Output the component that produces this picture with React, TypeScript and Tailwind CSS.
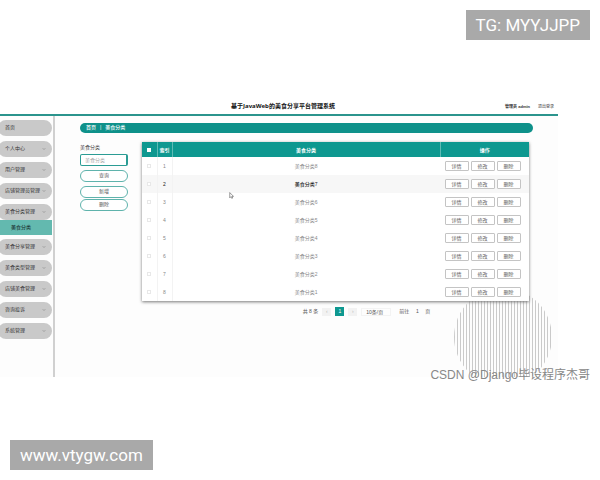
import clsx from 'clsx'
import { ChevronDown } from 'lucide-react'

const MENU_TOP = ['首页', '个人中心', '用户管理', '店铺管理员管理', '美食分类管理']
const MENU_BOTTOM = ['美食分享管理', '美食类型管理', '店铺美食管理', '咨询投诉', '系统管理']
const ROWS = [1, 2, 3, 4, 5, 6, 7, 8]
const STRIPES = Array.from({ length: 33 }, (_, i) => i)

function MenuItem({ label }: { label: string }) {
  return (
    <button className="-ml-0.5 flex h-4 items-center justify-between rounded-full bg-[#c9c9c9] pr-1.5 pl-[7px] text-[5px] text-[#333]">
      <span>{label}</span>
      {label !== '首页' && <ChevronDown size={4} strokeWidth={4} className="text-[#888]" />}
    </button>
  )
}

function Sidebar() {
  return (
    <nav className="w-[55px] shrink-0 border-r-2 border-[#d0d0d0] pt-1 pr-px">
      <div className="flex flex-col gap-[5px]">
        {MENU_TOP.map((label) => (
          <MenuItem key={label} label={label} />
        ))}
      </div>
      <a
        href="#category"
        className="mb-1 flex h-[15px] items-center bg-[#63b9af] pl-[11px] text-[5px] font-medium text-[#1f3b39]"
      >
        美食分类
      </a>
      <div className="flex flex-col gap-[5px]">
        {MENU_BOTTOM.map((label) => (
          <MenuItem key={label} label={label} />
        ))}
      </div>
    </nav>
  )
}

function SearchPanel() {
  return (
    <form className="flex w-12 shrink-0 flex-col pt-px text-[5px]">
      <label htmlFor="category" className="mb-[3px] leading-2 text-[#444]">
        美食分类
      </label>
      <input
        id="category"
        placeholder="美食分类"
        className="mb-1 h-3 w-full rounded-xs border border-r-2 border-[#2b9c94] bg-white px-1 placeholder:text-[#aaa]"
      />
      <button type="button" className="mb-1 h-3 rounded-full border border-[#5fb3ac] bg-white text-[#555]">
        查询
      </button>
      <button type="button" className="mb-px h-3 rounded-full border border-[#5fb3ac] bg-white text-[#555]">
        新增
      </button>
      <button type="button" className="h-3 rounded-full border border-[#5fb3ac] bg-white text-[#555]">
        删除
      </button>
    </form>
  )
}

function CategoryTable() {
  return (
    <table className="w-full table-fixed border-collapse bg-white text-center text-[5px] leading-[6px] shadow-[0_1px_3px_#777]">
      <thead>
        <tr className="h-[15px] bg-[#0e9890] text-white">
          <th className="w-[15px] border-r border-[#5fbbb5] p-0">
            <input type="checkbox" aria-label="全选" className="mx-auto block size-1 appearance-none bg-white" />
          </th>
          <th className="w-[15px] border-r border-[#5fbbb5] p-0">索引</th>
          <th className="border-r border-[#5fbbb5] p-0">美食分类</th>
          <th className="w-[89px] p-0">操作</th>
        </tr>
      </thead>
      <tbody>
        {ROWS.map((n) => (
          <tr key={n} className={clsx('h-[18px]', n === 2 ? 'bg-[#f7f7f7] text-[#222]' : 'text-[#888]')}>
            <td className="border-r border-[#f3f3f3] p-0">
              <input
                type="checkbox"
                aria-label={`选择 ${n}`}
                className="mx-auto block size-1 appearance-none border border-[#e8e8e8] bg-white"
              />
            </td>
            <td className="border-r border-[#f3f3f3] p-0">{n}</td>
            <td className={clsx('p-0', n === 2 && 'font-medium')}>美食分类{9 - n}</td>
            <td className="p-0 pr-1">
              <div className="flex justify-center gap-0.5">
                {['详情', '修改', '删除'].map((action) => (
                  <button key={action} className="h-2.5 w-6 rounded-[1px] border border-[#c4c4c4] bg-white text-[#555]">
                    {action}
                  </button>
                ))}
              </div>
            </td>
          </tr>
        ))}
      </tbody>
    </table>
  )
}

function Pagination() {
  return (
    <div className="mt-1.5 flex h-[9px] items-center justify-center pl-[62px] text-[5px] text-[#555]">
      <span className="mr-1">共 8 条</span>
      <button className="mr-1 h-2 w-[9px] bg-[#f2f2f2] text-[#bbb]">‹</button>
      <button className="mr-1 h-[9px] w-[9px] bg-[#0e9890] text-white">1</button>
      <button className="mr-1 h-2 w-[9px] bg-[#f2f2f2] text-[#bbb]">›</button>
      <select aria-label="每页条数" className="mr-2 h-2 w-[30px] appearance-none border border-[#f3f3f3] px-1">
        <option>10条/页</option>
      </select>
      <label htmlFor="page">前往</label>
      <input id="page" defaultValue="1" className="w-4 text-center" />
      <span>页</span>
    </div>
  )
}

function StripedCircle() {
  return (
    <svg viewBox="0 0 98 92" className="absolute right-1.5 bottom-0 h-[92px] w-[98px]">
      <clipPath id="disc">
        <circle cx="49" cy="52" r="49" />
      </clipPath>
      <g clipPath="url(#disc)">
        {STRIPES.map((i) => (
          <rect key={i} x={i * 3} y="0" width="1" height="92" fill="#cacaca" />
        ))}
      </g>
    </svg>
  )
}

function Cursor() {
  return (
    <svg viewBox="0 0 8 12" className="absolute top-[76px] left-[174px] h-[7px] w-[5px]">
      <path d="M1 1v9l2-2 1.5 3 1.5-.7L4.700 7.500H7.500z" fill="#fff" stroke="#555" strokeWidth="1" />
    </svg>
  )
}

export default function App() {
  return (
    <div className="relative flex min-h-svh flex-col justify-between bg-white font-['Liberation_Sans','Noto_Sans_CJK_SC',sans-serif]">
      <div className="flex justify-end pt-2.5 pr-2.5">
        <p className="bg-[#a9a9a9] px-2.5 font-['Roboto',sans-serif] text-[17px] leading-[30px] text-white">
          TG: MYYJJPP
        </p>
      </div>

      <div className="mr-[7%] mb-auto pt-[59px]">
        <header className="grid h-[17px] grid-cols-[1fr_auto_1fr] items-center border-b-2 border-[#2b948d] pl-2">
          <h1 className="col-start-2 font-['Open_Sans','Noto_Sans_CJK_SC',sans-serif] text-[6px] font-bold text-[#111]">
            基于JavaWeb的美食分享平台管理系统
          </h1>
          <div className="flex justify-end gap-2 pr-1 text-[4px] text-[#333]">
            <span className="font-bold">管理员 admin</span>
            <a href="#logout">退出登录</a>
          </div>
        </header>
        <div className="relative flex bg-[#fdfdfd]">
          <StripedCircle />
          <Sidebar />
          <main className="relative min-w-0 flex-1 pt-[7px] pr-[25px] pb-[61px] pl-[25px]">
            <div className="mb-[9px] flex h-2.5 items-center gap-1 rounded-full bg-[#0e918a] px-1.5 text-[5px] font-medium text-white">
              <a href="#home">首页</a>
              <span>|</span>
              <span>美食分类</span>
            </div>
            <div className="flex gap-3.5 pr-1">
              <SearchPanel />
              <div className="min-w-0 flex-1">
                <CategoryTable />
                <Pagination />
              </div>
            </div>
            <Cursor />
          </main>
        </div>
      </div>

      <p className="absolute right-2.5 bottom-[97px] text-[12px] leading-4 text-[#888]">CSDN @Django毕设程序杰哥</p>

      <div className="flex pb-2.5 pl-2.5">
        <p className="bg-[#a9a9a9] px-2.5 font-['Roboto',sans-serif] text-[17px] leading-[30px] text-white">
          www.vtygw.com
        </p>
      </div>
    </div>
  )
}
